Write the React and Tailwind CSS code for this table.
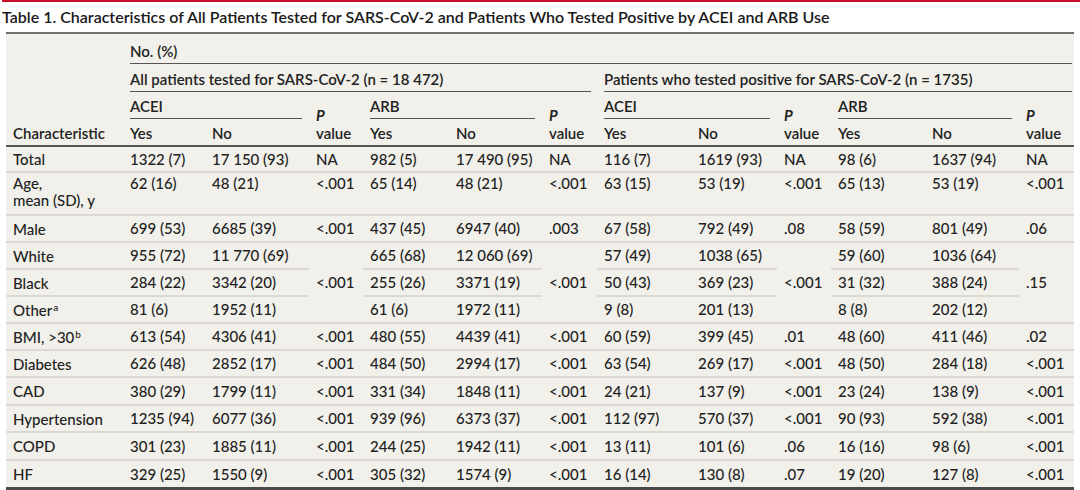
import React from "react";

const GRID =
  "grid grid-cols-[117px_82px_104px_54px_86px_93px_55px_94px_86px_54px_94px_94px_55px]";

const T = " ";

const rows = [
  { label: "Total", h: "h-[26px]", v: ["1322 (7)", `17${T}150 (93)`, "NA", "982 (5)", `17${T}490 (95)`, "NA", "116 (7)", "1619 (93)", "NA", "98 (6)", "1637 (94)", "NA"] },
  { label: "age", h: "h-[43px]", top: true, v: ["62 (16)", "48 (21)", "<.001", "65 (14)", "48 (21)", "<.001", "63 (15)", "53 (19)", "<.001", "65 (13)", "53 (19)", "<.001"] },
  { label: "Male", h: "h-[27px]", v: ["699 (53)", "6685 (39)", "<.001", "437 (45)", "6947 (40)", ".003", "67 (58)", "792 (49)", ".08", "58 (59)", "801 (49)", ".06"] },
];

const rows2 = [
  { label: "BMI, >30", sup: "b", h: "h-[27px]", v: ["613 (54)", "4306 (41)", "<.001", "480 (55)", "4439 (41)", "<.001", "60 (59)", "399 (45)", ".01", "48 (60)", "411 (46)", ".02"] },
  { label: "Diabetes", h: "h-[27px]", v: ["626 (48)", "2852 (17)", "<.001", "484 (50)", "2994 (17)", "<.001", "63 (54)", "269 (17)", "<.001", "48 (50)", "284 (18)", "<.001"] },
  { label: "CAD", h: "h-[28px]", v: ["380 (29)", "1799 (11)", "<.001", "331 (34)", "1848 (11)", "<.001", "24 (21)", "137 (9)", "<.001", "23 (24)", "138 (9)", "<.001"] },
  { label: "Hypertension", h: "h-[27px]", v: ["1235 (94)", "6077 (36)", "<.001", "939 (96)", "6373 (37)", "<.001", "112 (97)", "570 (37)", "<.001", "90 (93)", "592 (38)", "<.001"] },
  { label: "COPD", h: "h-[28px]", v: ["301 (23)", "1885 (11)", "<.001", "244 (25)", "1942 (11)", "<.001", "13 (11)", "101 (6)", ".06", "16 (16)", "98 (6)", "<.001"] },
  { label: "HF", h: "h-[29px]", last: true, v: ["329 (25)", "1550 (9)", "<.001", "305 (32)", "1574 (9)", "<.001", "16 (14)", "130 (8)", ".07", "19 (20)", "127 (8)", "<.001"] },
];

const race = [
  { label: "White", sup: null, v: ["955 (72)", `11${T}770 (69)`, "665 (68)", `12${T}060 (69)`, "57 (49)", "1038 (65)", "59 (60)", "1036 (64)"] },
  { label: "Black", sup: null, v: ["284 (22)", "3342 (20)", "255 (26)", "3371 (19)", "50 (43)", "369 (23)", "31 (32)", "388 (24)"] },
  { label: "Other", sup: "a", v: ["81 (6)", "1952 (11)", "61 (6)", "1972 (11)", "9 (8)", "201 (13)", "8 (8)", "202 (12)"] },
];
const raceP = ["<.001", "<.001", "<.001", ".15"];

function Sup({ c }) {
  return <span className="relative -top-[5px] ml-[1px] text-[10px] leading-none">{c}</span>;
}

function Cell({ h, top, last, children, className = "" }) {
  const border = last ? "border-b-[3px] border-[#4a4a4a]" : "border-b-2 border-[#dad8d0]";
  const align = top ? "items-start pt-[2px]" : "items-center";
  return (
    <div className={`${h} ${border} ${align} flex pl-[7px] whitespace-nowrap ${className}`}>{children}</div>
  );
}

function Underlined({ h, pr, children }) {
  return (
    <div className={`${h} ${pr} flex items-end pl-[7px]`}>
      <div className="w-full border-b border-[#555] pb-[3px] leading-[18px] font-semibold whitespace-nowrap">{children}</div>
    </div>
  );
}

function PVal() {
  return (
    <div className="row-span-2 flex flex-col justify-end pl-[7px] pb-[3px] leading-[18px]">
      <span className="font-bold italic">P</span>
      <span className="font-semibold">value</span>
    </div>
  );
}

function Sub({ children }) {
  return <div className="h-[26px] flex items-end pl-[7px] pb-[3px] leading-[18px] font-semibold">{children}</div>;
}

export default function App() {
  return (
    <div className="w-[1080px] h-[490px] bg-white overflow-hidden font-['Lato','Liberation_Sans',sans-serif] text-[#222]">
      <div className="ml-[2px] h-[2px] bg-[#c8102e]" />
      <div className="h-[30px] pl-[2px] flex items-center text-[16px] font-semibold text-[#1a1a1a] whitespace-nowrap">
        Table 1. Characteristics of All Patients Tested for SARS-CoV-2 and Patients Who Tested Positive by ACEI and ARB Use
      </div>
      <div className={`${GRID} ml-[6px] w-[1068px] bg-[#f1f0ea] border-t-2 border-[#707070] text-[15px] font-medium`}>
        {/* header */}
        <div className="row-span-4 flex items-end pl-[7px] pb-[3px] leading-[18px] font-semibold">Characteristic</div>
        <div className="col-span-12">
          <Underlined h="h-[30px]" pr="pr-[2px]">No. (%)</Underlined>
        </div>
        <div className="col-span-6">
          <Underlined h="h-[28px]" pr="pr-[6px]">All patients tested for SARS-CoV-2 (n = 18{T}472)</Underlined>
        </div>
        <div className="col-span-6">
          <Underlined h="h-[28px]" pr="pr-[2px]">Patients who tested positive for SARS-CoV-2 (n = 1735)</Underlined>
        </div>
        {[0, 1, 2, 3].map((i) => (
          <React.Fragment key={i}>
            <div className="col-span-2">
              <Underlined h="h-[27px]" pr="pr-[7px]">{i % 2 === 0 ? "ACEI" : "ARB"}</Underlined>
            </div>
            <PVal />
          </React.Fragment>
        ))}
        {[0, 1, 2, 3].map((i) => (
          <React.Fragment key={i}>
            <Sub>Yes</Sub>
            <Sub>No</Sub>
          </React.Fragment>
        ))}
        <div className="col-span-13 h-[2px] bg-[#555]" />

        {/* first rows */}
        {rows.map((r, ri) => (
          <React.Fragment key={ri}>
            <Cell h={r.h} top={r.top}>
              {r.label === "age" ? (
                <div className="leading-[17px]">
                  Age,
                  <br />
                  mean (SD), y
                </div>
              ) : (
                <span className="leading-[18px]">{r.label}</span>
              )}
            </Cell>
            {r.v.map((v, vi) => (
              <Cell key={vi} h={r.h} top={r.top}>
                <span className="leading-[17px]">{v}</span>
              </Cell>
            ))}
          </React.Fragment>
        ))}

        {/* race rows */}
        {race.map((r, ri) => (
          <React.Fragment key={ri}>
            <Cell h="h-[27px]">
              <span className="leading-[18px]">
                {r.label}
                {r.sup && <Sup c={r.sup} />}
              </span>
            </Cell>
            {[0, 1, 2, 3].map((g) => (
              <React.Fragment key={g}>
                <Cell h="h-[27px]">{r.v[g * 2]}</Cell>
                <Cell h="h-[27px]">{r.v[g * 2 + 1]}</Cell>
                {ri === 0 && (
                  <div className="row-span-3 flex items-center pl-[7px] border-b-2 border-[#dad8d0]">{raceP[g]}</div>
                )}
              </React.Fragment>
            ))}
          </React.Fragment>
        ))}

        {/* remaining rows */}
        {rows2.map((r, ri) => (
          <React.Fragment key={ri}>
            <Cell h={r.h} last={r.last}>
              <span className="leading-[18px]">
                {r.label}
                {r.sup && <Sup c={r.sup} />}
              </span>
            </Cell>
            {r.v.map((v, vi) => (
              <Cell key={vi} h={r.h} last={r.last}>
                {v}
              </Cell>
            ))}
          </React.Fragment>
        ))}
      </div>
    </div>
  );
}
